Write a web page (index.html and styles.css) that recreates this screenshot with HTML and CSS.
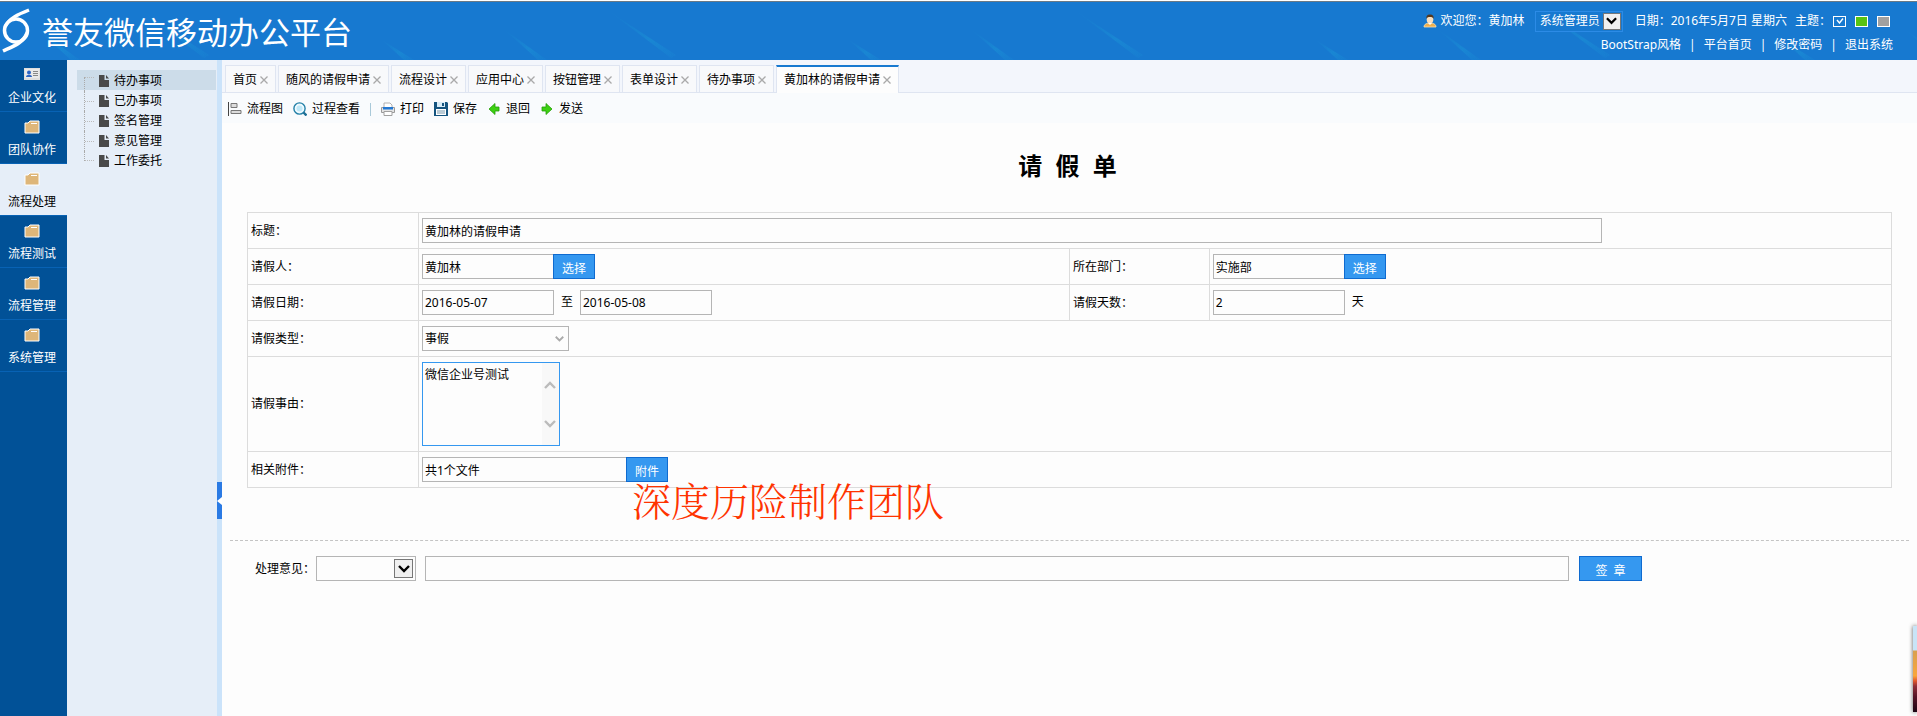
FILE: index.html
```html
<!DOCTYPE html>
<html lang="zh-CN">
<head>
<meta charset="utf-8">
<title>誉友微信移动办公平台</title>
<link rel="stylesheet" href="styles.css">
</head>
<body>
<svg class="defs" width="0" height="0" aria-hidden="true">
  <symbol id="folder" viewBox="0 0 16 14"><path d="M1 3h3l2-2h9v12H1z" fill="#deb679" stroke="#fff" stroke-width="1"/><path d="M7 3.500h6" stroke="#fff"/></symbol>
  <symbol id="doc" viewBox="0 0 10 12"><path d="M0 0h5.500v5H10v7H0z" fill="#4a4a4a"/><path d="M7 0l3 3.500H7z" fill="#4a4a4a"/></symbol>
  <symbol id="close" viewBox="0 0 8 8"><path d="M.5.5l7 7M7.500.5l-7 7" stroke="#a9a9a9" stroke-width="1.300"/></symbol>
  <symbol id="chev" viewBox="0 0 12 8"><path d="M1 1l5 5 5-5" fill="none" stroke="currentColor" stroke-width="2.400"/></symbol>
</svg>
<header class="header">
  <svg class="streaks" width="100%" height="58" aria-hidden="true">
    <defs>
      <linearGradient id="glow" x1="0" y1="0" x2="1" y2="1"><stop offset="0" stop-color="#1b9ad8" stop-opacity="0"/><stop offset=".6" stop-color="#1d9fd9" stop-opacity=".35"/><stop offset="1" stop-color="#1b9ad8" stop-opacity=".1"/></linearGradient>
      <pattern id="tile" width="467" height="58" patternUnits="userSpaceOnUse">
        <path d="M38 28L80 58H71z" fill="url(#glow)"/><path d="M143 10L209 53l-5 3z" fill="url(#glow)"/><path d="M382 38L414 58h-10z" fill="url(#glow)"/>
      </pattern>
    </defs>
    <rect width="100%" height="58" fill="url(#tile)"/>
  </svg>
  <div class="brand">
    <svg width="32" height="46" viewBox="0 0 32 46" fill="none" stroke="#fff" aria-hidden="true"><circle cx="16" cy="22.500" r="11.500" stroke-width="3.500"/><path d="M29 2C19 6 9 10 5 19M3 43c11-5 20-8 24-18" stroke-width="3.500"/></svg>
    <h1 class="brand-name">誉友微信移动办公平台</h1>
  </div>
  <div class="account">
    <div class="account-row">
      <svg width="14" height="14" viewBox="0 0 14 14" aria-hidden="true"><path d="M1 13c0-3 3-4 6-4s6 1 6 4z" fill="#f0b04d" stroke="#fce1ae" stroke-width=".8"/><ellipse cx="7" cy="5.500" rx="3.300" ry="4" fill="#f8dfc0"/><path d="M3.500 5C3 2 4 .5 7 .5S11 2 10.500 5C10 3.500 9 3 7 3S4 3.500 3.500 5z" fill="#54381f"/><path d="M5 9l2 2 2-2" fill="#fff"/></svg>
      <span class="welcome">欢迎您<span class="colon">：</span>黄加林</span>
      <span class="role"><select class="role-select" aria-label="角色"><option>系统管理员</option></select><span class="drop role-drop"><svg width="11" height="8"><use href="#chev"/></svg></span></span>
      <span class="date">日期<span class="colon">：</span>2016年5月7日 星期六</span>
      <span class="theme-label">主题<span class="colon">：</span></span>
      <span class="themes">
        <button class="swatch swatch-blue" aria-label="蓝色"><svg width="8" height="6" viewBox="0 0 8 6"><path d="M1 2l2.500 3L7 .5" fill="none" stroke="#fff" stroke-width="1.400"/></svg></button>
        <button class="swatch swatch-green" aria-label="绿色"></button>
        <button class="swatch swatch-gray" aria-label="灰色"></button>
      </span>
    </div>
    <nav class="account-links"><a href="#">BootStrap风格</a><span>|</span><a href="#">平台首页</a><span>|</span><a href="#">修改密码</a><span>|</span><a href="#">退出系统</a></nav>
  </div>
</header>
<div class="body">
  <nav class="rail">
    <a class="rail-item" href="#"><svg width="16" height="14" viewBox="0 0 16 14"><path d="M0 0h16v12H0z" fill="#dedede"/><path d="M1 1h14v9H1z" fill="#e9e9e9"/><path d="M2 9c0-3 6-3 6 0z" fill="#2c64c4"/><circle cx="5" cy="4.500" r="2" fill="#2c64c4"/><path d="M9 3.500h5M9 5.500h5M9 7.500h5" stroke="#888"/></svg><span>企业文化</span></a>
    <a class="rail-item" href="#"><svg width="16" height="14"><use href="#folder"/></svg><span>团队协作</span></a>
    <a class="rail-item active" href="#"><svg width="16" height="14"><use href="#folder"/></svg><span>流程处理</span></a>
    <a class="rail-item" href="#"><svg width="16" height="14"><use href="#folder"/></svg><span>流程测试</span></a>
    <a class="rail-item" href="#"><svg width="16" height="14"><use href="#folder"/></svg><span>流程管理</span></a>
    <a class="rail-item" href="#"><svg width="16" height="14"><use href="#folder"/></svg><span>系统管理</span></a>
  </nav>
  <aside class="side">
    <ul class="tree">
      <li><a class="node selected" href="#"><i class="branch"></i><svg width="10" height="12"><use href="#doc"/></svg>待办事项</a></li>
      <li><a class="node" href="#"><i class="branch"></i><svg width="10" height="12"><use href="#doc"/></svg>已办事项</a></li>
      <li><a class="node" href="#"><i class="branch"></i><svg width="10" height="12"><use href="#doc"/></svg>签名管理</a></li>
      <li><a class="node" href="#"><i class="branch"></i><svg width="10" height="12"><use href="#doc"/></svg>意见管理</a></li>
      <li><a class="node" href="#"><i class="branch"></i><svg width="10" height="12"><use href="#doc"/></svg>工作委托</a></li>
    </ul>
  </aside>
  <div class="splitter"><button class="collapse" aria-label="收起"><svg width="5" height="8" viewBox="0 0 5 8"><path d="M5 0v8L0 4z" fill="#fff"/></svg></button></div>
  <main class="main">
    <nav class="tabs">
      <a class="tab" href="#">首页<svg width="8" height="8"><use href="#close"/></svg></a>
      <a class="tab" href="#">随风的请假申请<svg width="8" height="8"><use href="#close"/></svg></a>
      <a class="tab" href="#">流程设计<svg width="8" height="8"><use href="#close"/></svg></a>
      <a class="tab" href="#">应用中心<svg width="8" height="8"><use href="#close"/></svg></a>
      <a class="tab" href="#">按钮管理<svg width="8" height="8"><use href="#close"/></svg></a>
      <a class="tab" href="#">表单设计<svg width="8" height="8"><use href="#close"/></svg></a>
      <a class="tab" href="#">待办事项<svg width="8" height="8"><use href="#close"/></svg></a>
      <a class="tab current" href="#">黄加林的请假申请<svg width="8" height="8"><use href="#close"/></svg></a>
    </nav>
    <div class="toolbar">
      <button class="tool"><svg width="14" height="14" viewBox="0 0 14 14"><path d="M.5 0v14" stroke="#444"/><path d="M3 1.500h6v4H3zM3 8.500h10v3H3z" fill="#dcdcdc" stroke="#777"/></svg>流程图</button>
      <button class="tool"><svg width="14" height="14" viewBox="0 0 14 14"><circle cx="6.500" cy="6.500" r="5.600" fill="#eefaff" stroke="#2380a8" stroke-width="1.400"/><circle cx="6.500" cy="6.500" r="3" fill="#bfe8f8"/><path d="M10.500 10.500l3 3" stroke="#1d6f96" stroke-width="2.400"/></svg>过程查看</button>
      <i class="tool-sep"></i>
      <button class="tool"><svg width="14" height="14" viewBox="0 0 14 14"><path d="M3 5V1h6l2 2v2" fill="#fff" stroke="#b0b0b0"/><path d="M.5 5.500h13v5H.5z" fill="#e4e4e4" stroke="#9a9a9a"/><path d="M2 5h10v2.500H2z" fill="#2378d2"/><path d="M3 9.500h8v4H3z" fill="#fff" stroke="#a0a0a0"/></svg>打印</button>
      <button class="tool"><svg width="14" height="14" viewBox="0 0 14 14"><path d="M0 0h13l1 1v13H0z" fill="#15547f"/><path d="M3 0h8v5H3z" fill="#d9edf8"/><path d="M8 1h2v3H8z" fill="#15547f"/><path d="M2 7h10v6H2z" fill="#fff"/><path d="M3 9h8M3 11h8" stroke="#7697ab"/></svg>保存</button>
      <button class="tool"><svg width="14" height="14" viewBox="0 0 14 14"><path d="M2 7l6-5.500V5h4v4H8v3.500z" fill="#3dd012" stroke="#249e08" stroke-width=".8"/></svg>退回</button>
      <button class="tool"><svg width="14" height="14" viewBox="0 0 14 14"><path d="M12 7L6 1.500V5H2v4h4v3.500z" fill="#3dd012" stroke="#249e08" stroke-width=".8"/></svg>发送</button>
    </div>
    <form class="page">
      <h2 class="form-title">请&nbsp; 假&nbsp; 单</h2>
      <table class="form-table">
        <colgroup><col class="c1"><col class="c2"><col class="c3"><col class="c4"></colgroup>
        <tr><th><label for="title">标题<span class="colon">：</span></label></th><td colspan="3"><input class="box wide" id="title" value="黄加林的请假申请"></td></tr>
        <tr><th><label for="who">请假人<span class="colon">：</span></label></th><td><div class="line"><input class="box joined" id="who" value="黄加林"><button type="button" class="btn">选择</button></div></td><th><label for="dept">所在部门<span class="colon">：</span></label></th><td><div class="line"><input class="box joined" id="dept" value="实施部"><button type="button" class="btn">选择</button></div></td></tr>
        <tr><th><label for="from">请假日期<span class="colon">：</span></label></th><td><div class="line"><input class="box short" id="from" value="2016-05-07"><label class="unit" for="to">至</label><input class="box short" id="to" value="2016-05-08"></div></td><th><label for="days">请假天数<span class="colon">：</span></label></th><td><div class="line"><input class="box short" id="days" value="2"><span class="unit">天</span></div></td></tr>
        <tr><th><label for="kind">请假类型<span class="colon">：</span></label></th><td colspan="3"><div class="line"><span class="pick"><select class="box kind" id="kind"><option>事假</option></select><svg class="pick-arrow" width="9" height="6"><use href="#chev"/></svg></span></div></td></tr>
        <tr><th><label for="why">请假事由<span class="colon">：</span></label></th><td colspan="3"><div class="line"><span class="pick"><textarea class="box why" id="why">微信企业号测试</textarea><span class="scroll"><svg class="up" width="12" height="8"><use href="#chev"/></svg><svg width="12" height="8"><use href="#chev"/></svg></span></span></div></td></tr>
        <tr><th><label for="files">相关附件<span class="colon">：</span></label></th><td colspan="3"><div class="line"><input class="box files" id="files" value="共1个文件"><button type="button" class="btn">附件</button></div></td></tr>
      </table>
      <div class="credit">深度历险制作团队</div>
      <div class="opinion">
        <label for="opinion">处理意见<span class="colon">：</span></label>
        <span class="pick"><select class="box preset" id="opinion"><option></option></select><span class="drop preset-drop"><svg width="12" height="8"><use href="#chev"/></svg></span></span>
        <input class="box remark" aria-label="意见内容">
        <button type="button" class="btn sign">签&nbsp; 章</button>
      </div>
    </form>
  </main>
</div>
<div class="peek"></div>
</body>
</html>
```
FILE: styles.css
```css
* { box-sizing: border-box; }
body, button, input, select, textarea {
  font: 12px/18px "Noto Sans", "Noto Sans CJK SC", sans-serif;
  color: #000;
}
body {
  margin: 0;
  height: 100vh;
  display: flex;
  flex-direction: column;
  overflow: hidden;
  background: #fdfdfd;
}
a { color: inherit; text-decoration: none; }
svg { display: block; flex: none; }
button { padding: 0; border: 0; background: none; }
.defs { position: absolute; }
.colon { font-family: "Noto Sans CJK TC", sans-serif; line-height: 1; }

.header {
  position: relative;
  display: flex;
  justify-content: space-between;
  height: 60px;
  border-top: 1px solid #fff;
  box-shadow: inset 0 1px #6b7a86;
  background: #1779d0;
  color: #fff;
}
.streaks { position: absolute; left: 0; top: 1px; }
.brand, .account { position: relative; }
.brand { display: flex; align-items: center; gap: 10px; }
.brand-name {
  margin: 0;
  font: 31px/44px "Noto Sans CJK SC", sans-serif;
}
.account {
  display: flex;
  flex-direction: column;
  align-items: flex-end;
  gap: 4px;
  padding: 9px 24px 0 0;
}
.account-row { display: flex; align-items: center; height: 22px; }
.welcome { margin: 0 10px 0 4px; }
.role { position: relative; display: flex; margin-right: 12px; }
.role-select {
  width: 88px;
  height: 21px;
  padding: 0 4px;
  appearance: none;
  border: 1px solid #2c8be6;
  background: #1779d0;
  color: #fff;
}
.drop {
  position: absolute;
  display: grid;
  place-items: center;
  border: 1px solid #777;
  background: #f0f0f0;
  color: #000;
  pointer-events: none;
}
.role-drop { top: 2px; right: 2px; width: 18px; height: 17px; }
.date { margin-right: 8px; }
.themes { display: flex; gap: 9px; padding: 0 3px 0 2px; }
.swatch {
  display: grid;
  place-items: center;
  width: 13px;
  height: 11px;
  border: 1px solid #fff;
}
.swatch-green { background: #58c312; }
.swatch-gray { background: #a0a0a0; }
.account-links { display: flex; gap: 8px; }

.body { flex: 1; display: flex; min-height: 0; }
.rail { width: 67px; flex: none; background: #015197; color: #fff; }
.rail-item {
  display: flex;
  flex-direction: column;
  align-items: center;
  gap: 7px;
  height: 52px;
  padding: 8px 3px 0 0;
  border-bottom: 1px solid #0862b4;
}
.active { background: #e6eef8; color: #000; }
.side { width: 150px; flex: none; background: #e6eef8; }
.tree { margin: 0; padding: 10px 1px 0 10px; list-style: none; }
.node { display: flex; align-items: center; height: 20px; padding-top: 2px; }
.node svg { margin: 0 5px 0 4px; }
.selected { background: #ccdce9; }
.branch {
  width: 11px;
  height: 20px;
  margin-left: 7px;
  border-left: 1px dotted #aaa;
  background: linear-gradient(90deg, #bbb 50%, transparent 50%) 0 10px / 2px 1px repeat-x;
}
li:first-child .branch { height: 14px; margin-top: 6px; background-position: 0 0; }
li:last-child .branch { height: 10px; margin-bottom: 10px; background-position: 0 9px; }
.splitter {
  display: flex;
  flex: none;
  align-items: center;
  width: 5px;
  padding-top: 225px;
  background: #cbe3fa;
}
.collapse { display: grid; place-items: center; width: 5px; height: 37px; background: #2a7ae4; }

.main { flex: 1; min-width: 0; }
.tabs {
  display: flex;
  align-items: flex-end;
  gap: 2px;
  height: 33px;
  padding-left: 3px;
  border-bottom: 1px solid #dfe5f1;
  background: #f3f6fc;
}
.tab {
  display: flex;
  align-items: center;
  gap: 3px;
  height: 27px;
  padding: 2px 7px 0;
  border: 1px solid #dfe5f1;
  border-bottom: 0;
  background: #f8f9fb;
  white-space: nowrap;
}
.tab.current {
  height: 28px;
  margin-bottom: -1px;
  padding-top: 0;
  border-top: 2px solid #1779d0;
  background: #fdfdfd;
}
.toolbar {
  display: flex;
  align-items: center;
  gap: 10px;
  height: 30px;
  padding: 2px 6px 0;
  background: #f9fbfd;
}
.tool { display: flex; align-items: center; gap: 5px; }
.tool-sep { width: 1px; height: 13px; background: #a9c9d9; }

.form-title {
  margin: 0;
  padding: 27px 4px 28px 0;
  text-align: center;
  font: bold 24px/34px "Liberation Sans", "Noto Sans CJK SC", sans-serif;
}
.form-table {
  width: calc(100% - 50px);
  margin-left: 25px;
  border-collapse: collapse;
  table-layout: fixed;
}
.c1 { width: 10.4%; }
.c2 { width: 39.6%; }
.c3 { width: 8.5%; }
.form-table th, .form-table td {
  height: 36px;
  padding: 5px 3px;
  border: 1px solid #dcdcdc;
  text-align: left;
  font-weight: normal;
}
.box {
  height: 25px;
  margin: 0;
  padding: 0 2px;
  border: 1px solid #b5b5b5;
  border-radius: 0;
  outline: 0;
  background: #fdfdfd;
}
select.box { appearance: none; }
.line { display: flex; }
.wide { display: block; width: 80.5%; }
.joined { width: 131px; border-right: 0; }
.short { width: 132px; }
.files { width: 204px; border-right: 0; }
.unit { margin: 0 7px; line-height: 24px; }
.btn {
  width: 42px;
  height: 25px;
  padding-top: 4px;
  border: 1px solid #0f6bd0;
  background: #3598f0;
  color: #fff;
}
.pick { position: relative; display: flex; }
.kind { width: 147px; }
.pick-arrow { position: absolute; right: 5px; top: 10px; color: #aaa; }
.why {
  width: 138px;
  height: 84px;
  padding: 3px 2px;
  border-color: #3598f0;
  resize: none;
}
.scroll {
  position: absolute;
  top: 1px;
  right: 1px;
  bottom: 1px;
  width: 17px;
  display: flex;
  flex-direction: column;
  align-items: center;
  justify-content: center;
  gap: 31px;
  background: #f8f8f8;
  color: #bbb;
  pointer-events: none;
}
.up { transform: rotate(180deg); }
.page { position: relative; }
.credit {
  position: absolute;
  left: 410px;
  top: 358px;
  font: 300 39px/36px "Noto Serif CJK SC", "Noto Sans CJK SC", serif;
  color: #ff3300;
}
.opinion {
  display: flex;
  align-items: center;
  margin: 52px 8px 0;
  padding: 15px 267px 0 25px;
  border-top: 1px dashed #c4c4c4;
}
.preset { width: 100px; margin-left: 1px; }
.preset-drop { top: 3px; right: 3px; width: 19px; height: 19px; }
.remark { flex: 1; min-width: 0; margin: 0 10px 0 9px; }
.sign { width: 63px; }
.peek {
  position: fixed;
  right: 0;
  bottom: 4px;
  width: 4px;
  height: 86px;
  background: linear-gradient(#c8e4f7 28%, #d9a04f 29%, #f9a63c 58%, #e0552b 64%, #8e2f38 70%, #571427 82%, #1c0513);
  box-shadow: 0 0 4px #555;
}
```
